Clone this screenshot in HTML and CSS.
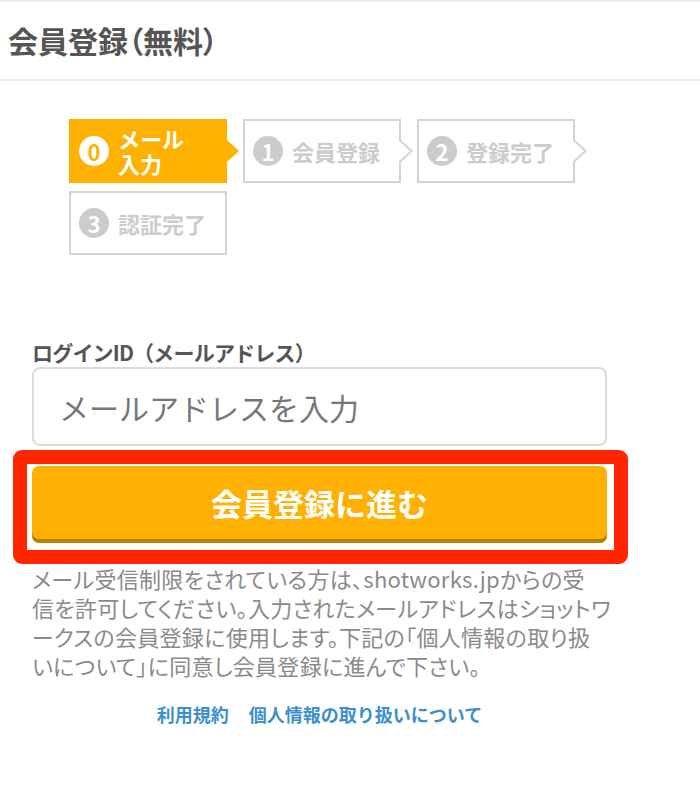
FILE: index.html
```html
<!DOCTYPE html>
<html lang="ja">
<head>
    <meta charset="UTF-8">
    <meta name="viewport" content="width=device-width, initial-scale=1.0">
    <title>会員登録（無料）</title>
    <link rel="stylesheet" href="styles.css">
</head>
<body>

    <header class="page-header">
        <h1>会員登録（無料）</h1>
    </header>

    <main class="content">
        <ol class="steps">
            <li class="step is-current">
                <span class="step-num">0</span>
                <span class="step-text">メール<br>入力</span>
            </li>
            <li class="step has-next">
                <span class="step-num">1</span>
                <span class="step-text">会員登録</span>
            </li>
            <li class="step has-next">
                <span class="step-num">2</span>
                <span class="step-text">登録完了</span>
            </li>
            <li class="step">
                <span class="step-num">3</span>
                <span class="step-text">認証完了</span>
            </li>
        </ol>

        <form class="signup" onsubmit="return false">
            <label class="field-label" for="mail">ログインID（メールアドレス）</label>
            <input class="field-input" type="email" id="mail" placeholder="メールアドレスを入力">

            <div class="submit-wrap">
                <button class="submit-btn" type="submit">会員登録に進む</button>
                <span class="highlight"></span>
            </div>

            <p class="notice">メール受信制限をされている方は、shotworks.jpからの受<br>信を許可してください。入力されたメールアドレスはショットワ<br>ークスの会員登録に使用します。下記の「個人情報の取り扱<br>いについて」に同意し会員登録に進んで下さい。</p>

            <p class="links">
                <a href="#">利用規約</a>
                <a href="#">個人情報の取り扱いについて</a>
            </p>
        </form>
    </main>

</body>
</html>
```

FILE: styles.css
```css
body {
    margin: 0;
    font-family: "Noto Sans CJK JP", "Noto Sans", sans-serif;
    background: #ffffff;
    color: #555555;
}

.page-header {
    border-top: 2px solid #f0f0f0;
    border-bottom: 2px solid #eeeeee;
}

.page-header h1 {
    margin: 0;
    padding: 0 8px;
    font-size: 30px;
    line-height: 77px;
    font-weight: bold;
    color: #555555;
    font-feature-settings: "palt";
}

.steps {
    list-style: none;
    margin: 38px 0 0;
    padding: 0 0 0 69px;
    display: flex;
    flex-wrap: wrap;
    gap: 8px 16px;
}

.step {
    position: relative;
    box-sizing: border-box;
    width: 158px;
    height: 64px;
    padding-left: 8px;
    border: 2px solid #d4d4d4;
    display: flex;
    align-items: center;
    gap: 9px;
    background: #ffffff;
}

.step-num {
    width: 30px;
    height: 30px;
    border-radius: 50%;
    background: #cccccc;
    color: #ffffff;
    font-size: 22px;
    font-weight: bold;
    line-height: 30px;
    text-align: center;
    flex-shrink: 0;
}

.step-text {
    font-size: 22px;
    font-weight: bold;
    line-height: 25px;
    color: #cccccc;
    white-space: nowrap;
}

.step.is-current {
    background: #ffb100;
    border-color: #ffb100;
}

.step.is-current .step-num {
    background: #ffffff;
    color: #ffb100;
}

.step.is-current .step-text {
    color: #ffffff;
}

.step.is-current:after {
    content: "";
    position: absolute;
    left: calc(100% + 2px);
    top: 50%;
    transform: translateY(-50%);
    border-left: 12px solid #ffb100;
    border-top: 11px solid transparent;
    border-bottom: 11px solid transparent;
}

.step.has-next:before,
.step.has-next:after {
    content: "";
    position: absolute;
    top: 50%;
    transform: translateY(-50%);
    border-left: 14px solid #d4d4d4;
    border-top: 13px solid transparent;
    border-bottom: 13px solid transparent;
}

.step.has-next:before {
    left: 100%;
}

.step.has-next:after {
    left: calc(100% - 3px);
    border-left-color: #ffffff;
}

.signup {
    padding: 0 32px;
    margin-top: 84px;
    width: 575px;
}

.field-label {
    display: block;
    font-size: 21px;
    font-weight: bold;
    line-height: 26px;
    letter-spacing: -0.8px;
    margin-bottom: 2px;
    color: #555555;
}

.field-input {
    box-sizing: border-box;
    width: 100%;
    height: 79px;
    padding: 0 25px;
    border: 2px solid #d6dde4;
    border-radius: 8px;
    font-family: inherit;
    font-size: 30px;
    color: #555555;
    outline: none;
}

.field-input::placeholder {
    color: #777777;
}

.submit-wrap {
    position: relative;
    margin-top: 20px;
}

.submit-btn {
    display: block;
    width: 100%;
    height: 73px;
    border: none;
    border-radius: 7px;
    background: #ffb000;
    box-shadow: 0 4px 0 #b88200;
    color: #ffffff;
    font-family: inherit;
    font-size: 31px;
    font-weight: bold;
    cursor: pointer;
}

/* red marker drawn round the button */
.highlight {
    position: absolute;
    top: -16px;
    left: -19px;
    right: -21px;
    bottom: -25px;
    border: 14px solid #ff2600;
    border-radius: 9px;
    pointer-events: none;
}

.notice {
    margin: 25px -30px 0 0;
    font-size: 22px;
    line-height: 29px;
    letter-spacing: 0.3px;
    color: #8a8a8a;
    font-feature-settings: "palt";
    white-space: nowrap;
}

.links {
    margin: 22px 0 0;
    text-align: center;
    font-size: 18px;
    line-height: 24px;
}

.links a {
    color: #3b8fcd;
    text-decoration: none;
    font-weight: bold;
    margin: 0 8px;
}
```
